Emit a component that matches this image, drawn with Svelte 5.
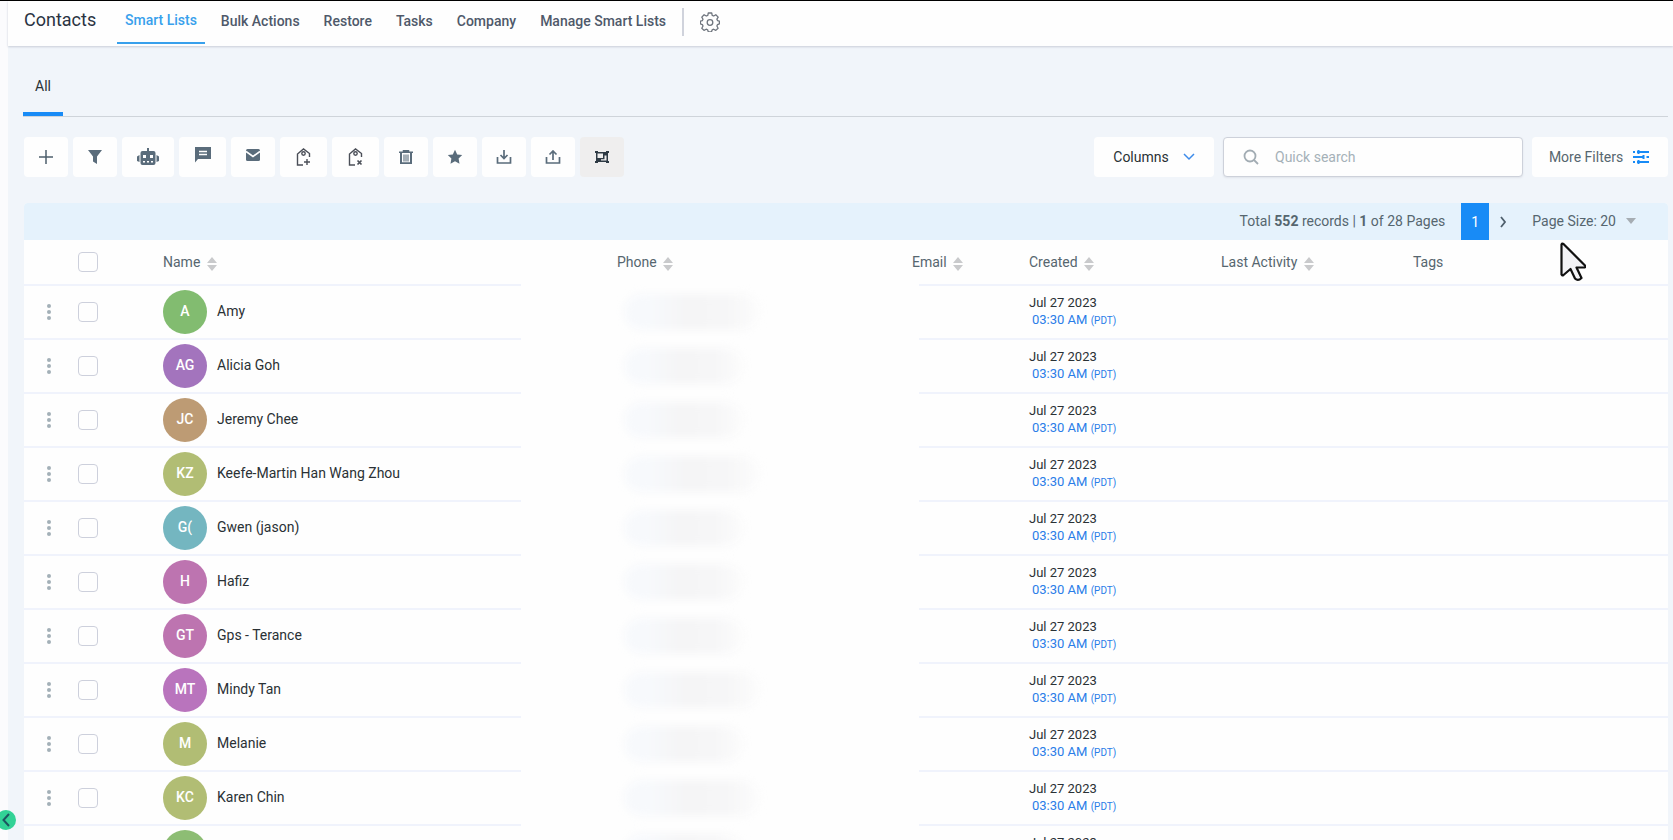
<script>
	let search = '';

	const navItems = ['Smart Lists', 'Bulk Actions', 'Restore', 'Tasks', 'Company', 'Manage Smart Lists'];

	const actions = [
		{ id: 'add', label: 'Add contact' },
		{ id: 'filter', label: 'Filter' },
		{ id: 'robot', label: 'Automation', size: 'xl' },
		{ id: 'sms', label: 'Send SMS', size: 'lg' },
		{ id: 'mail', label: 'Send email' },
		{ id: 'tag-add', label: 'Add tag', size: 'lg' },
		{ id: 'tag-remove', label: 'Remove tag', size: 'lg' },
		{ id: 'trash', label: 'Delete' },
		{ id: 'star', label: 'Review request' },
		{ id: 'download', label: 'Import' },
		{ id: 'upload', label: 'Export' },
		{ id: 'merge', label: 'Merge', muted: true }
	];

	const contacts = [
		{ initials: 'A', name: 'Amy', color: '#82bc70', blur: 'wide' },
		{ initials: 'AG', name: 'Alicia Goh', color: '#a374bd' },
		{ initials: 'JC', name: 'Jeremy Chee', color: '#bd9b74' },
		{ initials: 'KZ', name: 'Keefe-Martin Han Wang Zhou', color: '#b1bd74', blur: 'wide' },
		{ initials: 'G(', name: 'Gwen (jason)', color: '#74b6c0' },
		{ initials: 'H', name: 'Hafiz', color: '#bd74b0' },
		{ initials: 'GT', name: 'Gps - Terance', color: '#bd74b0' },
		{ initials: 'MT', name: 'Mindy Tan', color: '#b974bd', blur: 'wide' },
		{ initials: 'M', name: 'Melanie', color: '#b1bd74' },
		{ initials: 'KC', name: 'Karen Chin', color: '#b1bd74', blur: 'wide' },
		{ initials: '', name: '', color: '#8dbd74' }
	];
</script>

{#snippet sort()}
	<svg class="sort" width="10" height="14" viewBox="0 0 10 14" aria-hidden="true">
		<path d="M5 0l5 6H0zM0 8h10l-5 6z" fill="#c9cacc" />
	</svg>
{/snippet}

<div class="page">
	<header class="topbar">
		<h1>Contacts</h1>
		<nav>
			{#each navItems as item, i}
				<a href="#top" class:active={i === 0}>{item}</a>
			{/each}
		</nav>
		<button class="gear" aria-label="Settings">
			<svg width="20" height="20" viewBox="0 0 20 20" fill="none" stroke="#6f757e" stroke-width="1.3" stroke-linejoin="round">
				<path d="M8.300 1h3.400l.5 2.400 1.500.6 2.100-1.300 2.400 2.400-1.300 2.100.6 1.400 1.900.6v2.600l-1.900.8-.6 1.400 1.200 2.200-2.300 2.200-2.200-1.200-1.400.6-.7 2H8.300l-.7-2-1.400-.6L4 18.400 1.800 16.200 3 14l-.6-1.400-2-.8V9.200l2-.6L3 7.200 1.800 5.100l2.300-2.400 2.200 1.300 1.500-.6z" />
				<circle cx="10" cy="10.500" r="2.800" />
			</svg>
		</button>
	</header>

	<main>
		<div class="tabs">
			<a href="#all" class="tab">All</a>
		</div>

		<div class="toolbar">
			<div class="actions">
				{#each actions as action}
					<button class="action {action.size ?? ''}" class:muted={action.muted} aria-label={action.label}>
						{#if action.id === 'add'}
							<svg width="14" height="14" viewBox="0 0 14 14"><path d="M7 0v14M0 7h14" stroke="#4d5f6c" stroke-width="1.5" /></svg>
						{:else if action.id === 'filter'}
							<svg width="14" height="14" viewBox="0 0 14 14"><path d="M0 0h14L9 6.500V14l-4-2.500v-5z" fill="#5a6c7b" /></svg>
						{:else if action.id === 'robot'}
							<svg width="22" height="18" viewBox="0 0 22 18" fill="#5a6c7b">
								<path d="M10 0h2v3h4.500a2 2 0 0 1 2 2v10a2 2 0 0 1-2 2h-11a2 2 0 0 1-2-2V5a2 2 0 0 1 2-2H10zM0 8.500L2.500 7v7L0 13zM22 8.500L19.500 7v7l2.500-1z" />
								<path d="M6 7h3v3H6zM13 7h3v3h-3zM6 13h2v1.500H6zM10 13h2v1.500h-2zM14 13h2v1.500h-2z" fill="#fff" />
							</svg>
						{:else if action.id === 'sms'}
							<svg class="raised" width="16" height="16" viewBox="0 0 16 16">
								<path d="M0 0h16v12H3L0 15.500z" fill="#5a6c7b" />
								<path d="M4 4.500h8M4 7.500h8" stroke="#fff" stroke-width="1.3" />
							</svg>
						{:else if action.id === 'mail'}
							<svg class="raised" width="14" height="12" viewBox="0 0 14 12">
								<rect width="14" height="12" rx="1.500" fill="#5a6c7b" />
								<path d="M0 2.500l7 5 7-5" fill="none" stroke="#fff" stroke-width="1.6" />
							</svg>
						{:else if action.id === 'tag-add' || action.id === 'tag-remove'}
							<svg width="16" height="18" viewBox="0 0 16 18" fill="none" stroke="#4b4f58" stroke-width="1.4">
								<path d="M7 17H1.500V6L7.500 1l6 4.500V9" />
								<circle cx="7.500" cy="5.500" r="1.700" />
								{#if action.id === 'tag-add'}
									<path d="M11 11v6M8 14h6" />
								{:else}
									<path d="M9.500 12.500l4 4M13.500 12.500l-4 4" stroke-width="1.7" />
								{/if}
							</svg>
						{:else if action.id === 'trash'}
							<svg width="14" height="14" viewBox="0 0 14 14" fill="none" stroke="#5a6c7b" stroke-width="1.5">
								<path d="M0 2.200h14M4.500 2V.8h5V2" />
								<path d="M2 2v11.200h10V2" stroke-width="2" />
								<path d="M5 4.500v7M7 4.500v7M9 4.500v7" stroke-width="1.1" />
							</svg>
						{:else if action.id === 'star'}
							<svg width="16" height="16" viewBox="0 0 16 16"><path d="M8 .8l2.200 4.600 5 .7-3.600 3.500.9 5.100L8 12.300l-4.500 2.400.9-5.100L.8 6.100l5-.7z" fill="#5a6c7b" /></svg>
						{:else if action.id === 'download'}
							<svg width="16" height="14" viewBox="0 0 16 14" fill="none" stroke="#5a6c7b" stroke-width="1.7"><path d="M1.500 7v6h13V7M8 0v8.500M4.500 5L8 8.500 11.500 5" /></svg>
						{:else if action.id === 'upload'}
							<svg width="16" height="14" viewBox="0 0 16 14" fill="none" stroke="#5a6c7b" stroke-width="1.7"><path d="M1.500 7v6h13V7M8 10V1M4.500 4.500L8 1l3.500 3.500" /></svg>
						{:else}
							<svg width="14" height="12" viewBox="0 0 14 12" fill="#2e3a44">
								<path d="M1 1h12v10H1z" />
								<path d="M0 0h3v2H0zM11 0h3v2h-3zM0 10h3v2H0zM11 10h3v2h-3z" />
								<path d="M2.500 2.500h5.500v4.500H2.500zM9.500 4.500h2v5H6V8.200h3.500z" fill="#efeeee" />
							</svg>
						{/if}
					</button>
				{/each}
			</div>

			<button class="columns">
				Columns
				<svg width="12" height="8" viewBox="0 0 12 8"><path d="M1 1l5 5 5-5" fill="none" stroke="#3d8bea" stroke-width="1.5" /></svg>
			</button>
			<label class="search">
				<svg width="16" height="16" viewBox="0 0 16 16" fill="none" stroke="#a2acb3" stroke-width="1.8">
					<circle cx="7" cy="7" r="5.500" />
					<path d="M11 11l4 4" />
				</svg>
				<input type="text" placeholder="Quick search" aria-label="Quick search" bind:value={search} />
			</label>
			<button class="more">
				More Filters
				<svg width="16" height="14" viewBox="0 0 16 14" fill="none" stroke="#188bf6" stroke-width="2">
					<path d="M0 2h2M4 2h12M0 7h11M13.500 7H16M0 12h2M4 12h12" />
					<path d="M5.500 0v4M10.500 5v4M5.500 10v4" />
				</svg>
			</button>
		</div>

		<section class="card">
			<div class="pagination">
				<span class="total">Total <b>552</b> records | <b>1</b> of 28 Pages</span>
				<button class="current">1</button>
				<button class="next" aria-label="Next page">
					<svg width="8" height="12" viewBox="0 0 8 12"><path d="M2 1l4 5-4 5" fill="none" stroke="#4f5f6c" stroke-width="1.8" /></svg>
				</button>
				<button class="page-size">
					Page Size: 20
					<svg width="10" height="6" viewBox="0 0 10 6"><path d="M0 0h10L5 6z" fill="#a6adb3" /></svg>
				</button>
			</div>

			<table>
				<thead>
					<tr>
						<th class="c-menu"></th>
						<th class="c-check"><input type="checkbox" aria-label="Select all" /></th>
						<th class="c-name">Name {@render sort()}</th>
						<th class="c-phone">Phone {@render sort()}</th>
						<th class="c-email">Email {@render sort()}</th>
						<th class="c-created">Created {@render sort()}</th>
						<th class="c-activity">Last Activity {@render sort()}</th>
						<th>Tags</th>
					</tr>
				</thead>
				<tbody>
					{#each contacts as contact}
						<tr>
							<td class="c-menu">
								<button class="dots" aria-label="Row menu">
									<svg width="4" height="16" viewBox="0 0 4 16" fill="#a3b0b8">
										<circle cx="2" cy="2" r="2" />
										<circle cx="2" cy="8" r="2" />
										<circle cx="2" cy="14" r="2" />
									</svg>
								</button>
							</td>
							<td class="c-check"><input type="checkbox" aria-label="Select {contact.name}" /></td>
							<td class="c-name">
								<div class="person">
									<span class="avatar" style="background: {contact.color}">{contact.initials}</span>
									<span class="name">{contact.name}</span>
								</div>
							</td>
							<td class="c-phone"><div class="smudge {contact.blur ?? ''}"></div></td>
							<td class="c-email"></td>
							<td class="c-created">
								<div class="date">Jul 27 2023</div>
								<div class="time">03:30 AM <small>(PDT)</small></div>
							</td>
							<td></td>
							<td></td>
						</tr>
					{/each}
				</tbody>
			</table>
		</section>
	</main>

	<button class="collapse" aria-label="Collapse sidebar">
		<svg width="8" height="14" viewBox="0 0 8 14"><path d="M7 1L1.500 7 7 13" fill="none" stroke="#1c5560" stroke-width="2" /></svg>
	</button>

	<svg class="cursor" width="28" height="42" viewBox="0 0 28 42" aria-hidden="true">
		<path d="M3.500 3.500v30q.5 1.500 2 .5l7-6 4.500 9.500q3 3 6.500-.5l-5-10.500h8q1.500-.5.500-2L5.500 3q-1.500-1-2 .5z" fill="#f3f3f6" stroke="#111" stroke-width="2.200" stroke-linejoin="round" />
	</svg>
</div>

<style>
	:global(body) {
		overflow: hidden;
	}

	.page {
		position: relative;
		box-sizing: border-box;
		height: 100vh;
		overflow: hidden;
		padding-left: 8px;
		border-top: 1px solid #000;
		background: #fbfbfd;
		color: #2a3135;
		font-family: Roboto, sans-serif;
		font-size: 14px;
		line-height: 20px;
	}

	button {
		padding: 0;
		border: 0;
		background: none;
		color: inherit;
		font: inherit;
		cursor: pointer;
	}

	svg {
		display: block;
		flex: none;
	}

	.topbar {
		display: flex;
		position: relative;
		height: 45px;
		padding-left: 16px;
		background: #fefefe;
		box-shadow: 0 1px 2px #c9ced8;
	}

	h1 {
		margin: 0;
		width: 93px;
		color: #2a3342;
		font-size: 18px;
		font-weight: 400;
		line-height: 37px;
	}

	nav {
		display: flex;
		gap: 8px;
	}

	nav a {
		height: 41px;
		padding: 0 8px;
		color: #4f596a;
		font-weight: 500;
		line-height: 40px;
		text-decoration: none;
	}

	nav a.active {
		border-bottom: 2px solid #38a0ec;
		color: #38a0ec;
		line-height: 38px;
	}

	.gear {
		align-self: flex-start;
		margin: 7px 0 0 8px;
		height: 28px;
		padding-left: 16px;
		border-left: 2px solid #d0d3dc;
	}

	main {
		padding: 0 5px 0 15px;
		background: #f1f5fa;
	}

	.tabs {
		height: 70px;
		border-bottom: 1px solid #cfd4da;
	}

	.tab {
		display: block;
		box-sizing: border-box;
		width: 40px;
		height: 70px;
		border-bottom: 4px solid #188bf6;
		color: #2a3135;
		line-height: 80px;
		text-align: center;
		text-decoration: none;
	}

	.toolbar {
		display: flex;
		gap: 9px;
		padding: 20px 0 26px;
	}

	.actions {
		display: flex;
		flex: 1;
		gap: 5px;
		padding-left: 1px;
	}

	.action,
	.columns,
	.more {
		display: flex;
		align-items: center;
		justify-content: center;
		height: 40px;
		border-radius: 4px;
		background: #fefefe;
	}

	.action {
		width: 44px;
	}

	.action.lg {
		width: 47px;
	}

	.action.xl {
		width: 52px;
	}

	.action.muted {
		background: #efeeee;
	}

	.raised {
		margin-bottom: 4px;
	}

	.columns {
		gap: 14px;
		width: 120px;
	}

	.search {
		display: flex;
		align-items: center;
		gap: 16px;
		box-sizing: border-box;
		width: 300px;
		height: 40px;
		padding: 0 19px;
		border: 1px solid #cdd1da;
		border-radius: 4px;
		background: #fefefe;
		box-shadow: 0 1px 2px #dfe3ea;
	}

	.search input {
		flex: 1;
		min-width: 0;
		padding: 0;
		border: 0;
		outline: 0;
		background: none;
		color: #2a3135;
		font: inherit;
	}

	.search input::placeholder {
		color: #a5b1b8;
		opacity: 1;
	}

	.more {
		gap: 10px;
		width: 136px;
		padding-right: 2px;
		color: #56666f;
	}

	.card {
		margin-left: 1px;
		overflow: hidden;
		border-radius: 4px 4px 0 0;
		background: #fefefe;
	}

	.pagination {
		display: flex;
		justify-content: flex-end;
		height: 37px;
		padding-right: 32px;
		background: #e5f2fc;
		color: #56666f;
		line-height: 36px;
	}

	.total {
		margin-right: 16px;
	}

	.current {
		width: 28px;
		background: #188bf6;
		color: #fff;
	}

	.next {
		display: flex;
		align-items: center;
		justify-content: center;
		width: 28px;
		margin-right: 15px;
	}

	.page-size {
		display: flex;
		align-items: center;
		gap: 10px;
		height: 36px;
	}

	table {
		width: 100%;
		border-collapse: separate;
		border-spacing: 0;
		table-layout: fixed;
	}

	th,
	td {
		box-sizing: border-box;
		padding: 0;
		border-bottom: 2px solid #f0f3fc;
		text-align: left;
	}

	th {
		height: 46px;
		color: #56666f;
		font-weight: 400;
	}

	td {
		height: 54px;
	}

	.sort {
		display: inline-block;
		margin-left: 3px;
		vertical-align: -4px;
	}

	.c-menu {
		width: 54px;
	}

	.c-check {
		width: 85px;
	}

	.c-name {
		width: 358px;
	}

	.c-phone {
		width: 391px;
		padding-left: 96px;
		border-bottom-color: transparent;
	}

	/* the divider resumes slightly inside the email column */
	.c-email {
		width: 117px;
		border-bottom-color: transparent;
		background: linear-gradient(#f0f3fc, #f0f3fc) 7px 100% / 100% 2px no-repeat border-box;
	}

	.c-created {
		width: 192px;
	}

	.c-activity {
		width: 192px;
	}

	td.c-menu {
		padding-left: 23px;
	}

	td.c-created {
		padding-bottom: 2px;
	}

	.dots {
		display: block;
	}

	input[type='checkbox'] {
		display: block;
		width: 20px;
		height: 20px;
		margin: 0;
		appearance: none;
		border: 1px solid #cdd0dc;
		border-radius: 4px;
		background: #fefefe;
	}

	.person {
		display: flex;
		align-items: center;
		gap: 10px;
	}

	.avatar {
		width: 44px;
		height: 44px;
		border-radius: 50%;
		color: #fff;
		font-weight: 500;
		line-height: 43px;
		text-align: center;
	}

	.name {
		padding-bottom: 2px;
	}

	.smudge {
		width: 120px;
		height: 36px;
		margin-left: 7px;
		border-radius: 18px;
		background: linear-gradient(90deg, #f7f9fc 20%, #f5f5f6 45%, #f6f6f7 75%, #fcfcfc);
		filter: blur(4px);
	}

	.smudge.wide {
		width: 136px;
	}

	.date,
	.time {
		font-size: 13px;
		line-height: 17px;
	}

	.time {
		padding-left: 3px;
		color: #2a7de8;
	}

	small {
		font-size: 10px;
	}

	.collapse {
		position: absolute;
		bottom: 10px;
		left: -4px;
		display: flex;
		align-items: center;
		justify-content: center;
		width: 20px;
		height: 20px;
		border-radius: 50%;
		background: #32d296;
	}

	.cursor {
		position: absolute;
		top: 240px;
		right: 87px;
		pointer-events: none;
	}
</style>
